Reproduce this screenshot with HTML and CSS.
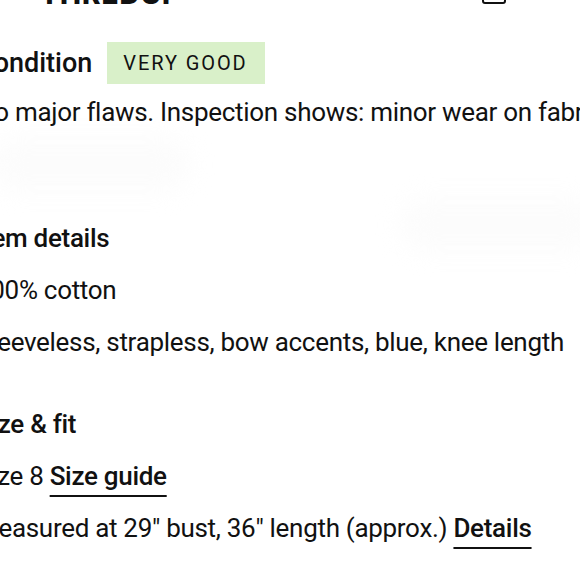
FILE: index.html
```html
<!DOCTYPE html>
<html>
<head>
<meta charset="utf-8">
<link rel="stylesheet" href="styles.css">
</head>
<body>
<div class="haze haze-a"></div>
<div class="haze haze-b"></div>
<header class="topbar">
  <span class="logo">THREDUP</span>
  <span class="search-tick"></span>
  <span class="bag"></span>
</header>
<main class="details">
  <section class="condition">
    <div class="condition-row">
      <h2 class="heading heading-lg">Condition</h2>
      <span class="badge">VERY GOOD</span>
    </div>
    <p class="line">No major flaws. Inspection shows: minor wear on fabric.</p>
  </section>
  <section class="item">
    <h2 class="heading line">Item details</h2>
    <p class="line">100% cotton</p>
    <p class="line">Sleeveless, strapless, bow accents, blue, knee length</p>
  </section>
  <section class="fit">
    <h2 class="heading line">Size &amp; fit</h2>
    <p class="line">Size 8 <a class="link">Size guide</a></p>
    <p class="line">Measured at 29" bust, 36" length (approx.) <a class="link">Details</a></p>
  </section>
</main>
</body>
</html>
```
FILE: styles.css
```css
html, body {
  margin: 0;
  padding: 0;
  background: #ffffff;
  overflow: hidden;
}
body {
  width: 580px;
  height: 580px;
  position: relative;
  font-family: "Roboto", "Liberation Sans", sans-serif;
  color: #111111;
}
.haze {
  position: absolute;
  background: #f9f9f9;
  filter: blur(12px);
  border-radius: 40px;
  opacity: 0.5;
}
.haze-a { left: -10px; top: 140px; width: 200px; height: 50px; }
.haze-b { left: 400px; top: 200px; width: 200px; height: 50px; }
.topbar {
  position: relative;
  display: flex;
  align-items: flex-end;
  height: 40px;
  margin-top: -36px;
  padding-left: 40px;
}
.logo {
  font-family: "Inter", sans-serif;
  font-weight: 800;
  font-size: 28px;
  letter-spacing: 1px;
  line-height: 28px;
  margin-bottom: -4px;
  color: #111;
}
.search-tick {
  width: 2px;
  height: 6px;
  background: #aaa;
  margin-left: 133px;
  margin-bottom: 4px;
}
.bag {
  width: 24px;
  height: 26px;
  border: 2.5px solid #111;
  border-radius: 3px;
  margin-left: 166px;
  box-sizing: border-box;
}
.details {
  position: relative;
  margin-left: -24px;
  white-space: nowrap;
}
.heading {
  margin: 0;
  font-size: 26px;
  font-weight: 500;
  letter-spacing: -0.3px;
}
.heading-lg {
  font-size: 27px;
  letter-spacing: 0;
}
.line {
  margin: 0;
  font-size: 26px;
  line-height: 52px;
  letter-spacing: -0.3px;
}
.condition {
  padding-top: 38px;
}
.condition-row {
  display: flex;
  align-items: center;
  gap: 15px;
  height: 42px;
  margin-bottom: 2px;
}
.badge {
  display: flex;
  align-items: center;
  height: 42px;
  padding: 0 17px 0 16px;
  background: #d9f0c9;
  font-size: 20px;
  font-weight: 400;
  letter-spacing: 1.9px;
}
.item {
  margin-top: 74px;
}
.fit {
  margin-top: 30px;
}
.link {
  font-weight: 500;
  text-decoration: underline;
  text-decoration-thickness: 2px;
  text-underline-offset: 10px;
  color: #111;
}
```
